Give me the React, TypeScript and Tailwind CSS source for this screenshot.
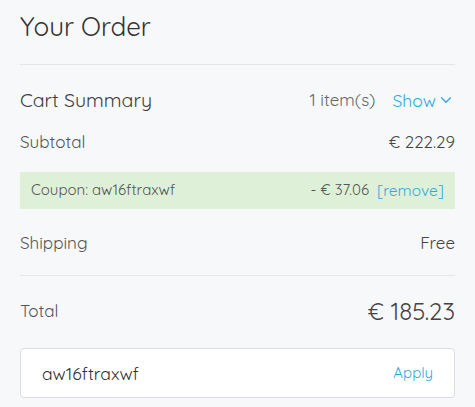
import React from 'react';
import { ChevronDown } from 'lucide-react';

const App: React.FC = () => {
  return (
    <div
      className="min-h-[407px] w-full bg-[#f7f8fa] px-5 text-[#4a4a4a]"
      style={{ fontFamily: 'Quicksand, Lato, "Noto Sans", sans-serif' }}
    >
      {/* Header */}
      <h1 className="pt-[9px] pb-[19px] text-[26px] leading-[36px] text-[#333]">Your Order</h1>
      <div className="h-px bg-[#e3e5e8]" />

      {/* Cart summary */}
      <div className="mt-[22px] flex items-center justify-between h-[26px]">
        <span className="text-[19.5px] text-[#3d3d3d]">Cart Summary</span>
        <div className="flex items-center">
          <span className="text-[17px] text-[#666]">1 item(s)</span>
          <button className="ml-[17px] flex items-center text-[17.5px] text-[#33a8e0]">
            Show
            <ChevronDown className="ml-[1px] h-[18px] w-[18px]" strokeWidth={1.7} />
          </button>
        </div>
      </div>

      <div className="mt-[18px] flex items-center justify-between h-[22px] text-[17px]">
        <span className="text-[#555]">Subtotal</span>
        <span className="text-[#444]">€ 222.29</span>
      </div>

      {/* Coupon */}
      <div className="mt-[19px] flex h-[37px] items-center justify-between bg-[#dff0d8] px-[11px] text-[15px]">
        <span className="text-[#555]">Coupon: aw16ftraxwf</span>
        <span className="flex items-center">
          <span className="text-[#555]">- € 37.06</span>
          <button className="ml-[8px] text-[15.5px] text-[#33a8e0]">[remove]</button>
        </span>
      </div>

      <div className="mt-[23px] flex items-center justify-between h-[22px] text-[17px]">
        <span className="text-[#555]">Shipping</span>
        <span className="text-[#444]">Free</span>
      </div>

      <div className="mt-[21px] h-px bg-[#e3e5e8]" />

      {/* Total */}
      <div className="mt-[21px] flex items-center justify-between h-[28px]">
        <span className="text-[17px] text-[#555]">Total</span>
        <span className="text-[24px] text-[#444]">€ 185.23</span>
      </div>

      {/* Coupon input */}
      <div className="mt-[23px] flex h-[50px] items-center justify-between rounded-[4px] border border-[#dcdde0] bg-white pl-[21px] pr-[21px]">
        <span className="text-[17.5px] text-[#333]">aw16ftraxwf</span>
        <button className="text-[15px] text-[#33a8e0]">Apply</button>
      </div>
    </div>
  );
};

export default App;
